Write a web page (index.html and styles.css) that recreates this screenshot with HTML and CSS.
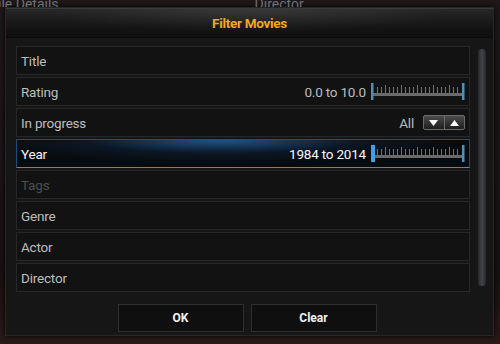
FILE: index.html
```html
<!DOCTYPE html>
<html lang="en">
<head>
    <meta charset="UTF-8">
    <title>Filter Movies</title>
    <meta name="viewport" content="width=device-width, initial-scale=1.0">
    <link rel="stylesheet" href="styles.css">
</head>
<body>
    <div class="backdrop">
        <span class="backdrop-left">ile Details</span>
        <span class="backdrop-right">Director</span>
    </div>

    <div class="dialog">
        <div class="dialog-header">Filter Movies</div>

        <div class="dialog-body">
            <div class="list">
                <div class="row"><span class="label">Title</span></div>

                <div class="row">
                    <span class="label">Rating</span>
                    <span class="value">0.0 to 10.0</span>
                    <svg class="slider" width="94" height="18" viewBox="0 0 94 18">
                        <rect x="2" y="10" width="89" height="3" fill="#6a6a6a"/>
                        <g fill="#707070">
                            <rect x="6" y="4" width="1" height="6"/><rect x="10" y="4" width="1" height="6"/>
                            <rect x="14" y="2" width="1" height="8"/><rect x="18" y="4" width="1" height="6"/>
                            <rect x="22" y="4" width="1" height="6"/><rect x="26" y="4" width="1" height="6"/>
                            <rect x="30" y="2" width="1" height="8"/><rect x="34" y="4" width="1" height="6"/>
                            <rect x="38" y="4" width="1" height="6"/><rect x="42" y="4" width="1" height="6"/>
                            <rect x="46" y="2" width="1" height="8"/><rect x="50" y="4" width="1" height="6"/>
                            <rect x="54" y="4" width="1" height="6"/><rect x="58" y="4" width="1" height="6"/>
                            <rect x="62" y="2" width="1" height="8"/><rect x="66" y="4" width="1" height="6"/>
                            <rect x="70" y="4" width="1" height="6"/><rect x="74" y="4" width="1" height="6"/>
                            <rect x="78" y="2" width="1" height="8"/><rect x="82" y="4" width="1" height="6"/>
                            <rect x="86" y="4" width="1" height="6"/>
                        </g>
                        <rect x="0" y="0" width="2.5" height="17" fill="#4f8fb8"/>
                        <rect x="91" y="0" width="2.5" height="17" fill="#4f8fb8"/>
                    </svg>
                </div>

                <div class="row">
                    <span class="label">In progress</span>
                    <span class="value">All</span>
                    <div class="spinner">
                        <span class="spin-half"><svg width="9" height="6" viewBox="0 0 9 6"><path d="M0 0h9L4.5 6z" fill="#fff"/></svg></span>
                        <span class="spin-half"><svg width="9" height="6" viewBox="0 0 9 6"><path d="M0 6h9L4.5 0z" fill="#fff"/></svg></span>
                    </div>
                </div>

                <div class="row focused">
                    <span class="label">Year</span>
                    <span class="value">1984 to 2014</span>
                    <svg class="slider" width="94" height="18" viewBox="0 0 94 18">
                        <rect x="2" y="10" width="89" height="3" fill="#6a6a6a"/>
                        <g fill="#707070">
                            <rect x="6" y="4" width="1" height="6"/><rect x="10" y="4" width="1" height="6"/>
                            <rect x="14" y="2" width="1" height="8"/><rect x="18" y="4" width="1" height="6"/>
                            <rect x="22" y="4" width="1" height="6"/><rect x="26" y="4" width="1" height="6"/>
                            <rect x="30" y="2" width="1" height="8"/><rect x="34" y="4" width="1" height="6"/>
                            <rect x="38" y="4" width="1" height="6"/><rect x="42" y="4" width="1" height="6"/>
                            <rect x="46" y="2" width="1" height="8"/><rect x="50" y="4" width="1" height="6"/>
                            <rect x="54" y="4" width="1" height="6"/><rect x="58" y="4" width="1" height="6"/>
                            <rect x="62" y="2" width="1" height="8"/><rect x="66" y="4" width="1" height="6"/>
                            <rect x="70" y="4" width="1" height="6"/><rect x="74" y="4" width="1" height="6"/>
                            <rect x="78" y="2" width="1" height="8"/><rect x="82" y="4" width="1" height="6"/>
                            <rect x="86" y="4" width="1" height="6"/>
                        </g>
                        <rect x="0" y="0" width="4" height="17" fill="#3aa0f0"/>
                        <rect x="91" y="0" width="2.5" height="17" fill="#4f8fb8"/>
                    </svg>
                </div>

                <div class="row disabled"><span class="label">Tags</span></div>
                <div class="row"><span class="label">Genre</span></div>
                <div class="row"><span class="label">Actor</span></div>
                <div class="row"><span class="label">Director</span></div>
            </div>

            <div class="scrollbar"></div>
        </div>

        <div class="buttons">
            <button class="btn btn-ok">OK</button>
            <button class="btn btn-clear">Clear</button>
        </div>
    </div>
</body>
</html>
```

FILE: styles.css
```css
body {
    margin: 0;
    width: 500px;
    height: 344px;
    overflow: hidden;
    background: linear-gradient(180deg, #201818 0%, #1a1212 80%, #2a1a1a 100%);
    font-family: Roboto, "Noto Sans", sans-serif;
}

.backdrop {
    height: 7px;
    overflow: hidden;
    display: flex;
    align-items: flex-end;
    color: #6c7178;
    font-size: 14px;
    line-height: 14px;
}

.backdrop span {
    margin-bottom: -4px;
}

.backdrop-left {
    margin-left: -2px;
}

.backdrop-right {
    margin-left: 196px;
}

.dialog {
    margin-left: 5px;
    width: 487px;
    height: 327px;
    background: #161616;
    border: 1px solid #262626;
    box-shadow: 0 0 6px rgba(0, 0, 0, 0.9);
    display: flex;
    flex-direction: column;
}

.dialog-header {
    height: 28px;
    display: flex;
    align-items: center;
    justify-content: center;
    color: #f0a81c;
    font-weight: bold;
    font-size: 13.5px;
    letter-spacing: -0.3px;
    background:
        radial-gradient(ellipse 60% 120% at 50% 0%, rgba(255, 255, 255, 0.09), rgba(255, 255, 255, 0) 70%),
        linear-gradient(180deg, #262626 0%, #161616 60%, #0e0e0e 100%);
    border-top: 1px solid #3a3a3a;
    border-bottom: 1px solid #0a0a0a;
}

.dialog-body {
    display: flex;
    padding: 8px 7px 0 10px;
}

.list {
    width: 455px;
    display: flex;
    flex-direction: column;
    gap: 2px;
}

.row {
    height: 27px;
    background: #121212;
    border: 1px solid #272727;
    display: flex;
    align-items: center;
    padding: 0 4px 0 4px;
    color: #bdbdbd;
    font-size: 13.5px;
    letter-spacing: -0.2px;
}

.label {
    flex: 1;
}

.value {
    margin-right: 5px;
}

.slider {
    display: block;
    margin-top: 1px;
}

.row.focused {
    color: #f6f6f6;
    background:
        radial-gradient(ellipse 55% 90% at 45% 0%, rgba(40, 110, 180, 0.75), rgba(20, 60, 110, 0.25) 55%, rgba(0, 0, 0, 0) 100%),
        #080a0c;
    border: 1px solid #1c4e78;
    border-bottom: 1px solid #3d8fd0;
}

.row.disabled {
    color: #4e4e4e;
}

.spinner {
    display: flex;
    width: 40px;
    height: 13px;
    margin-left: 4px;
    border: 1px solid #6a6a6a;
    border-radius: 2px;
    background: linear-gradient(180deg, #4a4a4a, #1e1e1e);
}

.spin-half {
    flex: 1;
    display: flex;
    align-items: center;
    justify-content: center;
}

.spin-half + .spin-half {
    border-left: 1px solid #6a6a6a;
}

.spin-half svg {
    display: block;
}

.scrollbar {
    width: 8px;
    height: 237px;
    margin-top: 3px;
    margin-left: 8px;
    border-radius: 4px;
    background: linear-gradient(90deg, #26282c, #404349 50%, #26282c);
}

.buttons {
    display: flex;
    justify-content: center;
    gap: 7px;
    margin-top: 12px;
    padding-right: 5px;
}

.btn {
    width: 126px;
    height: 28px;
    background: #0f0f0f;
    border: 1px solid #2e2e2e;
    color: #f2f2f2;
    font-family: Roboto, "Noto Sans", sans-serif;
    font-weight: bold;
    font-size: 12px;
    cursor: pointer;
}
```
